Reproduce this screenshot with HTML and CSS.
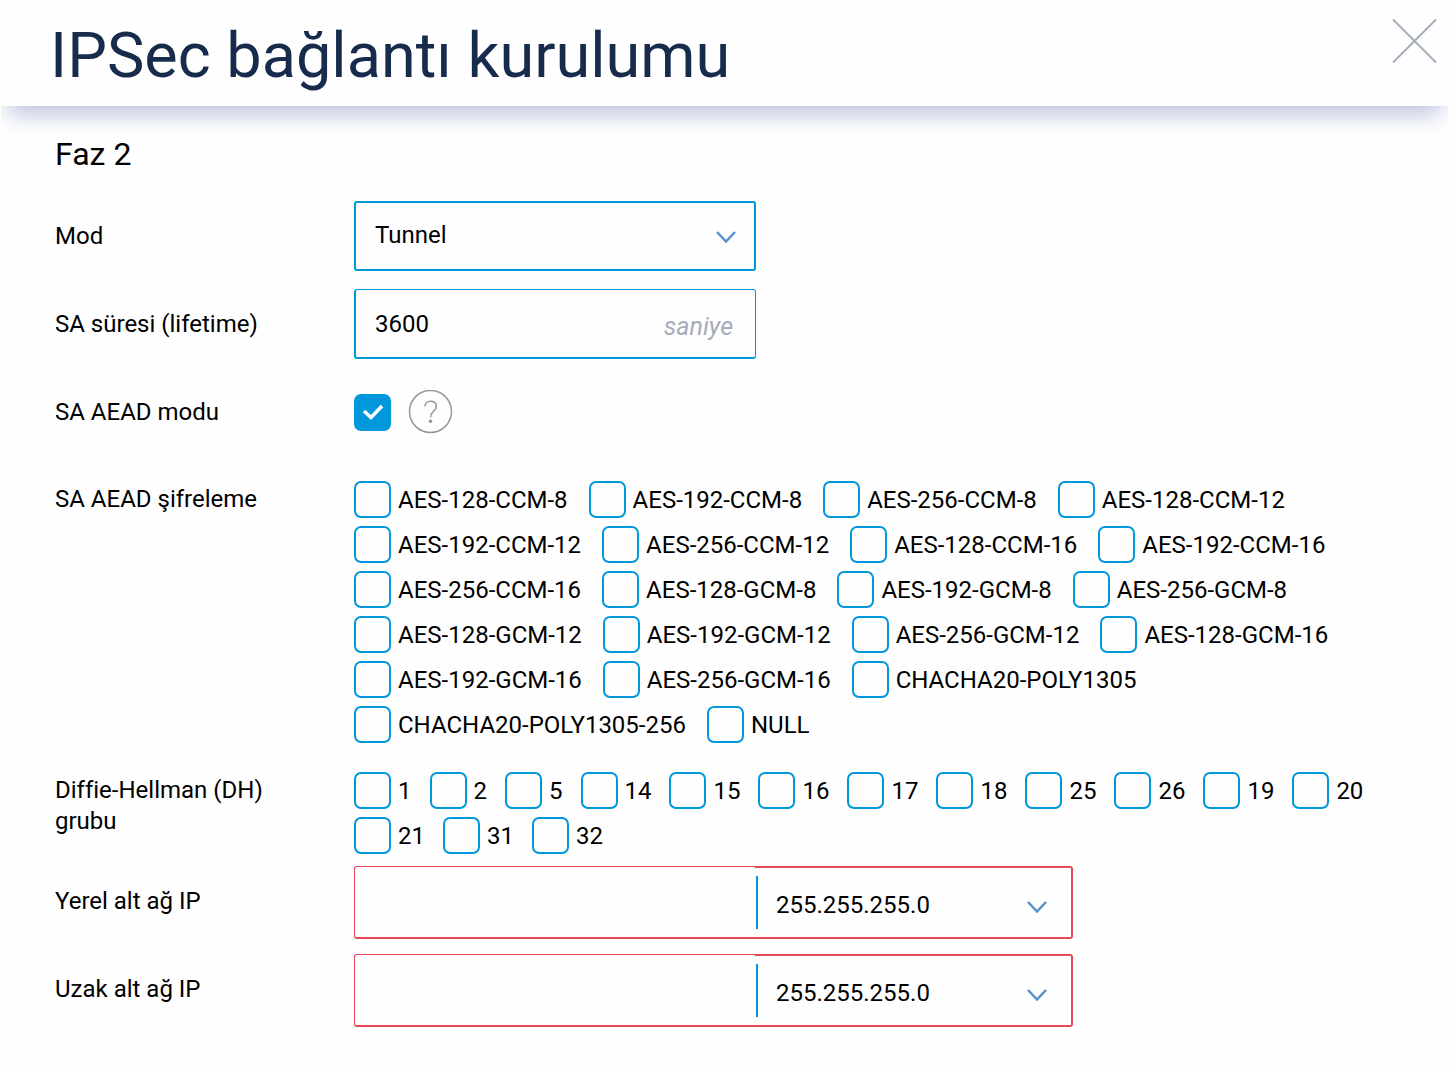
FILE: index.html
```html
<!DOCTYPE html>
<html lang="tr">
<head>
	<meta charset="UTF-8">
	<meta name="viewport" content="width=device-width, initial-scale=1">
	<title>IPSec bağlantı kurulumu</title>
	<link rel="stylesheet" href="styles.css">
</head>
<body>
<header class="header">
	<h1 class="title">IPSec bağlantı kurulumu</h1>
	<button type="button" class="close" aria-label="Kapat">
		<svg width="46" height="46" viewBox="0 0 46 46"><path d="M1 1.5L44 44.5M44 1.5L1 44.5"/></svg>
	</button>
</header>

<form class="form">
	<h2 class="phase">Faz 2</h2>

	<div class="row">
		<label class="name" for="mode">Mod</label>
		<div class="field">
			<select class="box" id="mode"><option>Tunnel</option><option>Transport</option></select>
			<svg class="arrow" width="20" height="12" viewBox="0 0 20 12"><path d="M1 1L10 10.5L19 1"/></svg>
		</div>
	</div>

	<div class="row">
		<label class="name" for="lifetime">SA süresi (lifetime)</label>
		<div class="field">
			<input class="box lifetime" type="text" id="lifetime" value="3600">
			<span class="unit">saniye</span>
		</div>
	</div>

	<div class="row aead">
		<label class="name" for="aead">SA AEAD modu</label>
		<input class="check" type="checkbox" id="aead" checked>
		<button type="button" class="help" aria-label="Yardım">
			<svg width="45" height="44" viewBox="0 0 45 44">
				<circle cx="22.5" cy="21.5" r="21"/>
				<path d="M17 16.5C17 13 19.5 11.2 22.5 11.2C26 11.2 28.3 13.3 28.3 16.4C28.3 18.8 27 20 25.2 21.6C23.2 23.4 22.5 24.5 22.5 27.5"/>
				<circle class="dot" cx="22.5" cy="31.2" r="1.8"/>
			</svg>
		</button>
	</div>

	<div class="row ciphers" role="group" aria-labelledby="cipherName">
		<span class="name" id="cipherName">SA AEAD şifreleme</span>
		<div class="options">
			<label class="option"><input class="check" type="checkbox">AES-128-CCM-8</label>
			<label class="option"><input class="check" type="checkbox">AES-192-CCM-8</label>
			<label class="option"><input class="check" type="checkbox">AES-256-CCM-8</label>
			<label class="option"><input class="check" type="checkbox">AES-128-CCM-12</label>
			<label class="option"><input class="check" type="checkbox">AES-192-CCM-12</label>
			<label class="option"><input class="check" type="checkbox">AES-256-CCM-12</label>
			<label class="option"><input class="check" type="checkbox">AES-128-CCM-16</label>
			<label class="option"><input class="check" type="checkbox">AES-192-CCM-16</label>
			<label class="option"><input class="check" type="checkbox">AES-256-CCM-16</label>
			<label class="option"><input class="check" type="checkbox">AES-128-GCM-8</label>
			<label class="option"><input class="check" type="checkbox">AES-192-GCM-8</label>
			<label class="option"><input class="check" type="checkbox">AES-256-GCM-8</label>
			<label class="option"><input class="check" type="checkbox">AES-128-GCM-12</label>
			<label class="option"><input class="check" type="checkbox">AES-192-GCM-12</label>
			<label class="option"><input class="check" type="checkbox">AES-256-GCM-12</label>
			<label class="option"><input class="check" type="checkbox">AES-128-GCM-16</label>
			<label class="option"><input class="check" type="checkbox">AES-192-GCM-16</label>
			<label class="option"><input class="check" type="checkbox">AES-256-GCM-16</label>
			<label class="option"><input class="check" type="checkbox">CHACHA20-POLY1305</label>
			<label class="option"><input class="check" type="checkbox">CHACHA20-POLY1305-256</label>
			<label class="option"><input class="check" type="checkbox">NULL</label>
		</div>
	</div>

	<div class="row groups" role="group" aria-labelledby="groupName">
		<span class="name" id="groupName">Diffie-Hellman (DH) grubu</span>
		<div class="options">
			<label class="option"><input class="check" type="checkbox">1</label>
			<label class="option"><input class="check" type="checkbox">2</label>
			<label class="option"><input class="check" type="checkbox">5</label>
			<label class="option"><input class="check" type="checkbox">14</label>
			<label class="option"><input class="check" type="checkbox">15</label>
			<label class="option"><input class="check" type="checkbox">16</label>
			<label class="option"><input class="check" type="checkbox">17</label>
			<label class="option"><input class="check" type="checkbox">18</label>
			<label class="option"><input class="check" type="checkbox">25</label>
			<label class="option"><input class="check" type="checkbox">26</label>
			<label class="option"><input class="check" type="checkbox">19</label>
			<label class="option"><input class="check" type="checkbox">20</label>
			<label class="option"><input class="check" type="checkbox">21</label>
			<label class="option"><input class="check" type="checkbox">31</label>
			<label class="option"><input class="check" type="checkbox">32</label>
		</div>
	</div>

	<div class="row subnet">
		<label class="name" for="localIp">Yerel alt ağ IP</label>
		<input class="ip" type="text" id="localIp">
		<div class="mask">
			<select aria-label="Yerel alt ağ maskesi"><option>255.255.255.0</option><option>255.255.0.0</option></select>
			<svg class="arrow" width="20" height="12" viewBox="0 0 20 12"><path d="M1 1L10 10.5L19 1"/></svg>
		</div>
	</div>

	<div class="row subnet">
		<label class="name" for="remoteIp">Uzak alt ağ IP</label>
		<input class="ip" type="text" id="remoteIp">
		<div class="mask">
			<select aria-label="Uzak alt ağ maskesi"><option>255.255.255.0</option><option>255.255.0.0</option></select>
			<svg class="arrow" width="20" height="12" viewBox="0 0 20 12"><path d="M1 1L10 10.5L19 1"/></svg>
		</div>
	</div>
</form>
</body>
</html>
```
FILE: styles.css
```css
* {
	box-sizing: border-box;
}
body {
	margin: 0;
	background: #fefefe;
	color: #000;
	font-family: Roboto, "Liberation Sans", sans-serif;
	font-size: 24px;
	line-height: 31px;
}
input, select, button {
	margin: 0;
	font: inherit;
	color: inherit;
}
svg {
	display: block;
	fill: none;
}
.header {
	display: flex;
	justify-content: space-between;
	align-items: flex-start;
	height: 106px;
	margin: 0 2px 0 1px;
	padding: 18px 10px 0 49px;
	background: #fefefe;
	box-shadow: 0 16px 22px -8px #b9c1de;
	clip-path: inset(0 0 -50px 0);
}
.title {
	margin: 0;
	color: #172b4d;
	font-size: 63px;
	font-weight: 400;
	line-height: 76px;
}
.close {
	padding: 0;
	border: 0;
	background: none;
	cursor: pointer;
}
.close svg {
	stroke: #a5adba;
	stroke-width: 2;
}
.form {
	padding: 28px 55px 42px;
}
.phase {
	margin: 0 0 27px;
	font-size: 32px;
	font-weight: 400;
	line-height: 40px;
}
.row {
	display: flex;
	align-items: center;
	margin-bottom: 18px;
}
.name {
	flex: none;
	width: 299px;
	padding-right: 60px;
}
.field {
	position: relative;
	width: 402px;
}
.box {
	display: block;
	width: 100%;
	height: 70px;
	padding: 0 19px 2px;
	border: 2px solid #0098db;
	border-radius: 3px;
	background: #fefefe;
	appearance: none;
}
.lifetime {
	padding-bottom: 0;
	border-width: 1px 1px 2px 2px;
}
.unit {
	position: absolute;
	right: 23px;
	top: 22px;
	color: #a5adba;
	font-size: 25px;
	font-style: italic;
}
.arrow {
	position: absolute;
	right: 20px;
	top: 30px;
	stroke: #5491cb;
	stroke-width: 2.5;
	pointer-events: none;
}
.check {
	flex: none;
	width: 37px;
	height: 37px;
	border: 2px solid #0098db;
	border-radius: 7px;
	background: #fefefe;
	appearance: none;
}
.check:checked {
	background: #0098db url("data:image/svg+xml,%3Csvg xmlns='http://www.w3.org/2000/svg' width='22' height='18' fill='none' stroke='white' stroke-width='3.5'%3E%3Cpath d='M2 8L9 14.5L20 3'/%3E%3C/svg%3E") center no-repeat;
}
.aead {
	height: 70px;
}
.help {
	margin-left: 17px;
	padding: 0;
	border: 0;
	background: none;
}
.help svg {
	stroke: #979797;
	stroke-width: 1.5;
}
.help .dot {
	fill: #979797;
	stroke: none;
}
.ciphers, .groups {
	align-items: flex-start;
}
.ciphers {
	margin: 34px 0 29px;
}
.groups {
	margin-bottom: 12px;
}
.ciphers .name, .groups .name {
	padding-top: 3px;
}
.options {
	display: flex;
	flex-wrap: wrap;
	gap: 8px 18px;
}
.ciphers .options {
	column-gap: 21px;
}
.option {
	display: flex;
	gap: 7px;
	height: 37px;
	line-height: 39px;
}
.subnet {
	margin-bottom: 15px;
}
.subnet .name {
	padding-bottom: 2px;
}
.ip {
	width: 401px;
	height: 73px;
	padding: 0 20px;
	border: solid #e84855;
	border-width: 1px 0 2px 1px;
	border-radius: 3px 0 0 3px;
	background: #fefefe;
}
.mask {
	position: relative;
	display: flex;
	align-items: center;
	width: 318px;
	height: 73px;
	padding-left: 1px;
	border: solid #e84855;
	border-width: 2px 2px 2px 0;
	border-radius: 0 3px 3px 0;
}
.mask select {
	width: 100%;
	height: 53px;
	padding: 6px 18px 0;
	border: 0;
	border-left: 2px solid #0098db;
	background: none;
	appearance: none;
}
.mask .arrow {
	right: 24px;
	top: 33px;
}
```
